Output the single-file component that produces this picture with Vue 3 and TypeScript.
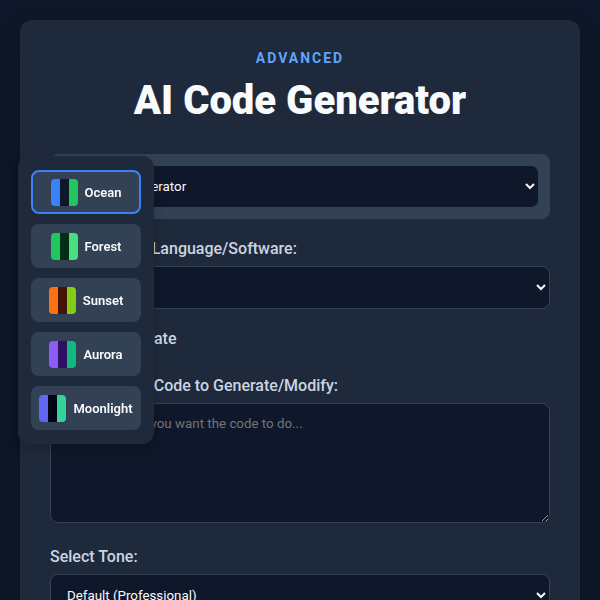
<script setup lang="ts">
import { ref } from 'vue'

interface Theme {
  name: string
  colors: string[]
}

const themes: Theme[] = [
  { name: 'Ocean', colors: ['#3b82f6', '#0f172a', '#22c55e'] },
  { name: 'Forest', colors: ['#22c55e', '#052e16', '#4ade80'] },
  { name: 'Sunset', colors: ['#f97316', '#431407', '#84cc16'] },
  { name: 'Aurora', colors: ['#8b5cf6', '#2e1065', '#10b981'] },
  { name: 'Moonlight', colors: ['#6366f1', '#020617', '#34d399'] },
]

const activeTheme = ref('Ocean')
const tool = ref('AI Code Generator')
const language = ref('')
const autoGenerate = ref(false)
const description = ref('')
const tone = ref('Default (Professional)')
</script>

<template>
  <div class="page">
    <main class="panel">
      <header class="header">
        <p class="eyebrow">ADVANCED</p>
        <h1>AI Code Generator</h1>
      </header>

      <div class="tool-bar">
        <select v-model="tool" class="field" aria-label="Tool">
          <option>AI Code Generator</option>
        </select>
      </div>

      <div class="group">
        <label for="language">Programming Language/Software:</label>
        <select id="language" v-model="language" class="field">
          <option value=""></option>
        </select>
      </div>

      <label class="check">
        <input v-model="autoGenerate" type="checkbox" />
        Auto Generate
      </label>

      <div class="group">
        <label for="description">Describe Your Code to Generate/Modify:</label>
        <textarea
          id="description"
          v-model="description"
          class="field"
          placeholder="Describe what you want the code to do..."
        ></textarea>
      </div>

      <div class="group">
        <label for="tone">Select Tone:</label>
        <select id="tone" v-model="tone" class="field">
          <option>Default (Professional)</option>
        </select>
      </div>
    </main>

    <aside class="themes" aria-label="Theme">
      <button
        v-for="theme in themes"
        :key="theme.name"
        type="button"
        class="theme"
        :class="{ active: theme.name === activeTheme }"
        :aria-pressed="theme.name === activeTheme"
        @click="activeTheme = theme.name"
      >
        <span class="swatch">
          <span v-for="color in theme.colors" :key="color" :style="{ background: color }"></span>
        </span>
        {{ theme.name }}
      </button>
    </aside>
  </div>
</template>

<style>
body {
  margin: 0;
  background: #0f172a;
}
</style>

<style scoped>
.page {
  box-sizing: border-box;
  height: 100vh;
  overflow: hidden;
  padding: 20px;
  background: #0f172a;
  color: #f8fafc;
  font-family: Roboto, sans-serif;
}

.panel {
  box-sizing: border-box;
  max-width: 800px;
  margin: 0 auto;
  padding: 30px;
  border-radius: 12px;
  background: #1e293b;
  box-shadow: 0 8px 24px rgba(0, 0, 0, 0.3);
}

.header {
  margin-bottom: 28px;
  text-align: center;
}

.eyebrow {
  margin: 0;
  color: #60a5fa;
  font-size: 14px;
  font-weight: 700;
  line-height: 16px;
  letter-spacing: 2px;
}

h1 {
  margin: 11px 0 0;
  padding-bottom: 1px;
  font-size: 40px;
  font-weight: 900;
  line-height: 48px;
}

.tool-bar {
  margin-bottom: 20px;
  padding: 11px;
  border-radius: 8px;
  background: #334155;
}

.group {
  margin-bottom: 24px;
}

.group label {
  display: block;
  margin-bottom: 8px;
  color: #cbd5e1;
  font-size: 16px;
  font-weight: 500;
  line-height: 19px;
}

.field {
  display: block;
  box-sizing: border-box;
  width: 100%;
  padding: 12px;
  border: 1px solid #334155;
  border-radius: 8px;
  background-color: #0f172a;
  color: #f8fafc;
  font-family: inherit;
}

select.field {
  height: 43px;
}

textarea.field {
  height: 120px;
  resize: vertical;
}

.check {
  display: flex;
  align-items: center;
  gap: 8px;
  margin: -4px 0 28px;
  color: #cbd5e1;
  font-size: 16px;
  font-weight: 500;
  line-height: 19px;
}

.check input {
  width: 16px;
  height: 16px;
  margin: 0;
}

.themes {
  position: fixed;
  top: 50%;
  left: 18px;
  display: flex;
  flex-direction: column;
  gap: 10px;
  box-sizing: border-box;
  width: 136px;
  padding: 14px 13px;
  border-radius: 12px;
  background: #1e293b;
  box-shadow: 0 4px 12px rgba(0, 0, 0, 0.2);
  transform: translateY(-50%);
}

.theme {
  display: flex;
  align-items: center;
  justify-content: center;
  gap: 7px;
  height: 44px;
  padding: 0;
  border: 2px solid transparent;
  border-radius: 8px;
  background: #334155;
  color: #f8fafc;
  font-family: inherit;
  font-size: 13px;
  font-weight: 600;
}

.theme.active {
  border-color: #3b82f6;
}

.swatch {
  display: flex;
  width: 27px;
  height: 27px;
  overflow: hidden;
  border-radius: 4px;
}

.swatch span {
  flex: 1;
}
</style>
